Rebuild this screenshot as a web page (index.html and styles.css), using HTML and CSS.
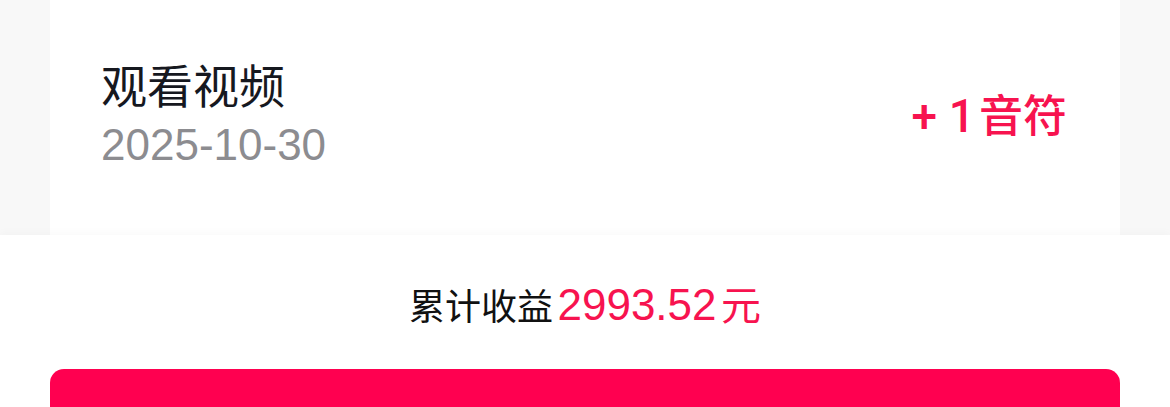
FILE: index.html
```html
<!DOCTYPE html>
<html lang="zh-CN">
<head>
<meta charset="utf-8">
<link rel="stylesheet" href="styles.css">
</head>
<body>
<div class="list">
  <div class="item">
    <div class="info">
      <div class="title">观看视频</div>
      <div class="date">2025-10-30</div>
    </div>
    <div class="reward"><span class="plus">+</span> <span class="num">1</span>音符</div>
  </div>
</div>
<div class="footer">
  <div class="total"><span class="label">累计收益</span> <span class="amount">2993.52</span> <span class="unit">元</span></div>
  <div class="button"></div>
</div>
</body>
</html>
```
FILE: styles.css
```css
html, body {
  margin: 0;
  padding: 0;
  background: #f8f8f8;
  font-family: "Liberation Sans", "Noto Sans CJK SC", sans-serif;
  overflow: hidden;
  height: 407px;
}
.list {
  padding: 0 50px;
}
.item {
  background: #ffffff;
  height: 235px;
  box-sizing: border-box;
  padding: 0 53px 0 51px;
  display: flex;
  align-items: center;
  justify-content: space-between;
}
.info {
  display: flex;
  flex-direction: column;
  margin-top: -10px;
}
.title {
  font-family: "Noto Sans CJK SC", sans-serif;
  font-size: 46px;
  line-height: 56px;
  color: #16181f;
}
.date {
  font-size: 44px;
  line-height: 52px;
  color: #8c8c90;
  margin-top: 8px;
}
.reward {
  font-family: "Noto Sans CJK SC", sans-serif;
  font-size: 44px;
  font-weight: 500;
  color: #f7134f;
  line-height: 56px;
  margin-top: -6px;
}
.reward .plus, .reward .num {
  font-family: "Roboto", sans-serif;
  font-weight: 500;
  font-size: 46px;
}
.reward .plus {
  margin-right: 2px;
}
.reward .num {
  margin-right: 4px;
}
.footer {
  background: #ffffff;
  box-shadow: 0 -3px 8px rgba(0, 0, 0, 0.025);
  position: relative;
  padding: 40px 50px 0;
}
.total {
  text-align: center;
  line-height: 56px;
  color: #111111;
}
.label {
  font-family: "Noto Sans CJK SC", sans-serif;
  font-size: 36px;
}
.amount {
  font-family: "Liberation Sans", sans-serif;
  font-size: 44px;
  color: #f7134f;
}
.unit {
  font-family: "Noto Sans CJK SC", sans-serif;
  font-size: 40px;
  color: #f7134f;
}
.button {
  margin-top: 26px;
  height: 80px;
  background: #ff0050;
  border-radius: 14px;
}
```
